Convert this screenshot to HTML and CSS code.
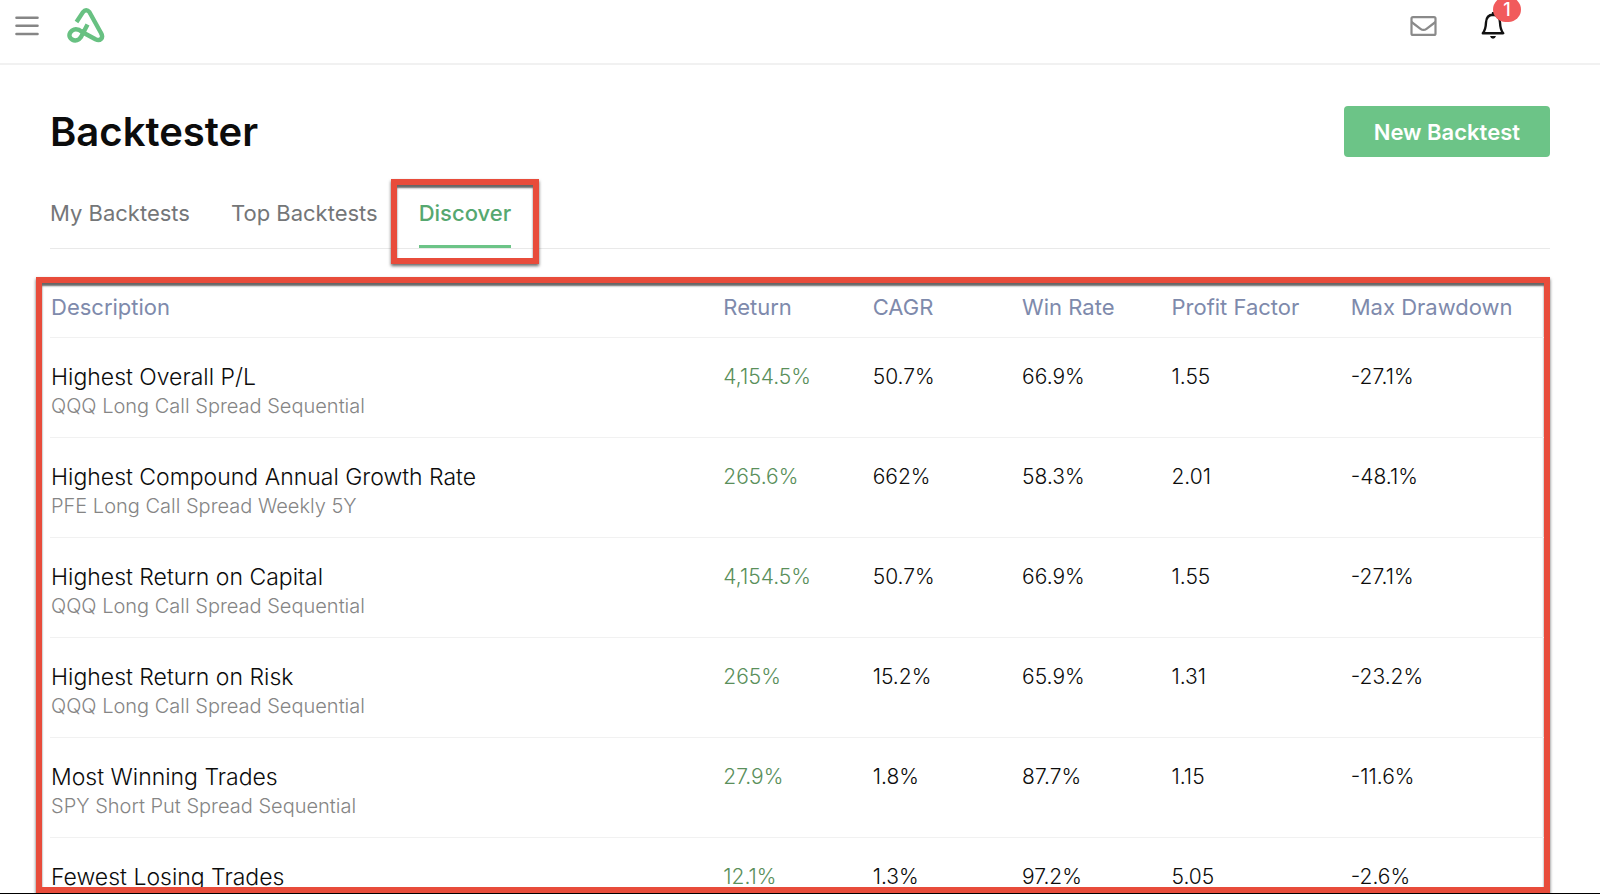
FILE: index.html
```html
<!DOCTYPE html>
<html lang="en">
<head>
    <meta charset="UTF-8">
    <meta name="viewport" content="width=device-width, initial-scale=1.0">
    <title>Backtester</title>
    <link rel="stylesheet" href="styles.css">
</head>
<body>
    <header class="topbar">
        <div class="topbar-left">
            <button class="icon-btn" type="button" aria-label="Menu">
                <svg width="24" height="20" viewBox="0 0 24 20" fill="none" stroke="#868686" stroke-width="2.6" stroke-linecap="round">
                    <path d="M1.5 1.8H22.5M1.5 9.8H22.5M1.5 18H22.5"/>
                </svg>
            </button>
            <a class="logo" href="#" aria-label="Home">
                <svg width="38" height="36" viewBox="0 0 38 36" fill="none" stroke="#68c182" stroke-width="4.4" stroke-linejoin="round">
                    <path d="M9.5 14L15.8 4.4Q19.2 0.3 22.5 4.2L34 25C37 30 33 33.5 28.5 31.3L15.5 24.2C11.5 21 8 20.5 5.2 22.5C1.5 25.5 1.5 29 5 31.5C8.5 33.5 12 32 14 29L20.5 16.5"/>
                </svg>
            </a>
        </div>
        <div class="topbar-right">
            <button class="icon-btn" type="button" aria-label="Messages">
                <svg width="27" height="20" viewBox="0 0 27 20" fill="none" stroke="#8a8a8a" stroke-width="2.2" stroke-linejoin="round">
                    <rect x="1.5" y="1.1" width="24" height="17.8" rx="1.5"/>
                    <path d="M1.5 6L10.5 12.8Q13.5 15 16.5 12.8L25.5 6"/>
                </svg>
            </button>
            <button class="icon-btn" type="button" aria-label="Notifications">
                <svg width="24" height="28" viewBox="0 0 24 28" fill="none" stroke="#111" stroke-width="2.4" stroke-linejoin="round" stroke-linecap="round">
                    <path d="M12 1V3M1.8 21.2C4.5 18 4.8 15.5 5 10.5C5.3 5.5 8 2.8 12 2.8S18.7 5.5 19 10.5C19.2 15.5 19.5 18 22.2 21.2Z"/>
                    <path d="M9 24H15Q14.2 26.8 12 26.8T9 24Z" fill="#111" stroke="none"/>
                </svg>
                <span class="badge">1</span>
            </button>
        </div>
    </header>

    <main class="page">
        <div class="page-head">
            <h1>Backtester</h1>
            <button class="btn-new" type="button">New Backtest</button>
        </div>

        <nav class="tabs">
            <a class="tab" href="#">My Backtests</a>
            <a class="tab" href="#">Top Backtests</a>
            <a class="tab active" href="#">Discover</a>
        </nav>

        <div class="results">
            <table>
                <thead>
                    <tr>
                        <th class="col-desc">Description</th>
                        <th class="col-num">Return</th>
                        <th class="col-num">CAGR</th>
                        <th class="col-num">Win Rate</th>
                        <th class="col-factor">Profit Factor</th>
                        <th class="col-max">Max Drawdown</th>
                    </tr>
                </thead>
                <tbody>
                    <tr>
                        <td class="name">Highest Overall P/L<span class="sub">QQQ Long Call Spread Sequential</span></td>
                        <td class="gain">4,154.5%</td>
                        <td>50.7%</td>
                        <td>66.9%</td>
                        <td>1.55</td>
                        <td>-27.1%</td>
                    </tr>
                    <tr>
                        <td class="name">Highest Compound Annual Growth Rate<span class="sub">PFE Long Call Spread Weekly 5Y</span></td>
                        <td class="gain">265.6%</td>
                        <td>662%</td>
                        <td>58.3%</td>
                        <td>2.01</td>
                        <td>-48.1%</td>
                    </tr>
                    <tr>
                        <td class="name">Highest Return on Capital<span class="sub">QQQ Long Call Spread Sequential</span></td>
                        <td class="gain">4,154.5%</td>
                        <td>50.7%</td>
                        <td>66.9%</td>
                        <td>1.55</td>
                        <td>-27.1%</td>
                    </tr>
                    <tr>
                        <td class="name">Highest Return on Risk<span class="sub">QQQ Long Call Spread Sequential</span></td>
                        <td class="gain">265%</td>
                        <td>15.2%</td>
                        <td>65.9%</td>
                        <td>1.31</td>
                        <td>-23.2%</td>
                    </tr>
                    <tr>
                        <td class="name">Most Winning Trades<span class="sub">SPY Short Put Spread Sequential</span></td>
                        <td class="gain">27.9%</td>
                        <td>1.8%</td>
                        <td>87.7%</td>
                        <td>1.15</td>
                        <td>-11.6%</td>
                    </tr>
                    <tr>
                        <td class="name">Fewest Losing Trades</td>
                        <td class="gain">12.1%</td>
                        <td>1.3%</td>
                        <td>97.2%</td>
                        <td>5.05</td>
                        <td>-2.6%</td>
                    </tr>
                </tbody>
            </table>
        </div>
    </main>
</body>
</html>
```
FILE: styles.css
```css
* {
    box-sizing: border-box;
}
body {
    margin: 0;
    height: 100vh;
    display: flex;
    flex-direction: column;
    overflow: hidden;
    background: #fff;
    border-bottom: 1px solid #000;
    color: #0c0c0c;
    font-family: Inter, "Open Sans", sans-serif;
    font-size: 22px;
}
a {
    color: inherit;
    text-decoration: none;
}
button {
    font-family: inherit;
    border: none;
    cursor: pointer;
}
svg {
    display: block;
}

/* top bar */
.topbar {
    flex: none;
    display: flex;
    justify-content: space-between;
    height: 65px;
    padding: 0 95px 12px 15px;
    border-bottom: 2px solid #f1f1f1;
}
.topbar-left, .topbar-right {
    display: flex;
    align-items: center;
}
.topbar-left {
    gap: 28px;
}
.topbar-right {
    gap: 44px;
}
.icon-btn {
    position: relative;
    padding: 0;
    background: none;
}
.badge {
    position: absolute;
    top: -15px;
    left: 12px;
    width: 28px;
    height: 25px;
    border-radius: 13px;
    background: #f15b5c;
    color: #fff;
    font-size: 18px;
    font-weight: 500;
    line-height: 25px;
    text-align: center;
}

/* page */
.page {
    flex: 1;
    min-height: 0;
    display: flex;
    flex-direction: column;
    padding: 41px 50px 0;
}
.page-head {
    display: flex;
    justify-content: space-between;
    align-items: center;
}
h1 {
    margin: 0;
    font-size: 40px;
    font-weight: 600;
    line-height: 51px;
}
.btn-new {
    padding: 0 30px;
    height: 51px;
    border-radius: 4px;
    background: #6cc487;
    color: #fff;
    font-size: 22px;
    font-weight: 600;
}
.tabs {
    display: flex;
    gap: 41px;
    margin-top: 36px;
    border-bottom: 1px solid #e9e9e9;
}
.tab {
    position: relative;
    padding: 6px 0 17px;
    border-bottom: 3px solid transparent;
    color: #747678;
    line-height: 29px;
}
.tab.active {
    color: #56a870;
    font-weight: 500;
    border-bottom-color: #6cc487;
}
.tab.active::after, .results {
    border: 6px solid #e84c3b;
    box-shadow: 0 2px 3px rgba(0, 0, 0, 0.6), inset 0 3px 2px rgba(0, 0, 0, 0.6);
}
.tab.active::after {
    content: "";
    position: absolute;
    top: -14px;
    right: -28px;
    bottom: -19px;
    left: -28px;
}

/* results table */
.results {
    flex: 1;
    min-height: 0;
    margin: 28px 0 0 -14px;
    padding-left: 8px;
    overflow: hidden;
}
table {
    width: 100%;
    table-layout: fixed;
    border-collapse: separate;
    border-spacing: 0;
}
th, td {
    padding: 0 0 0 1px;
    border-bottom: 1px solid #f1f1f1;
    text-align: left;
    white-space: nowrap;
}
th {
    height: 55px;
    padding-bottom: 6px;
    color: #7e8aac;
    font-size: 22px;
    font-weight: 400;
}
td {
    height: 100px;
    padding-top: 24px;
    font-size: 21px;
    font-weight: 300;
    line-height: 30px;
    vertical-align: top;
}
.name {
    font-size: 23px;
}
.col-desc {
    width: 45%;
}
.col-num {
    width: 10%;
}
.col-factor {
    width: 12%;
}
.col-max {
    width: 13%;
}
.gain {
    color: #5a8f5b;
}
.sub {
    display: block;
    color: #858585;
    font-size: 20px;
    line-height: 28px;
}
```
